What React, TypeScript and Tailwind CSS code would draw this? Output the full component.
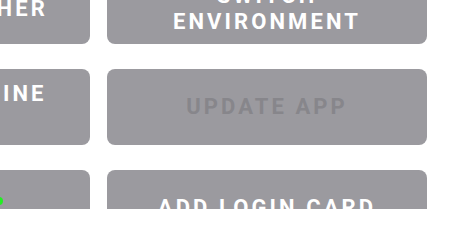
export default function App() {
  const card =
    'flex items-center justify-center rounded-lg bg-[#9b9a9f] px-4 text-center text-[22px] font-bold uppercase leading-[26px] tracking-[0.14em]'

  return (
    <div className="h-[209px] w-[455px] overflow-hidden bg-white font-['Roboto',sans-serif]">
      <div className="-mt-[27px] -ml-[230px] grid grid-cols-[320px_320px] grid-rows-[71px_76px_76px] gap-x-[17px] gap-y-[25px]">
        {/* Row 1 */}
        <div className={`${card} text-white`}>Launch another</div>
        <div className={`${card} text-white`}>
          Switch
          <br />
          Environment
        </div>

        {/* Row 2 */}
        <div className={`${card} text-white`}>
          Remote machine
          <br />
          ID
        </div>
        <div className={`${card} text-[#87868b]`}>Update App</div>

        {/* Row 3 */}
        <div className={`${card} relative text-white`}>
          <span className="absolute left-[221px] top-[27px] h-[8px] w-[12px] rounded-full bg-[#22ee22]" />
          Status
        </div>
        <div className={`${card} text-white`}>Add Login Card</div>
      </div>
    </div>
  )
}
